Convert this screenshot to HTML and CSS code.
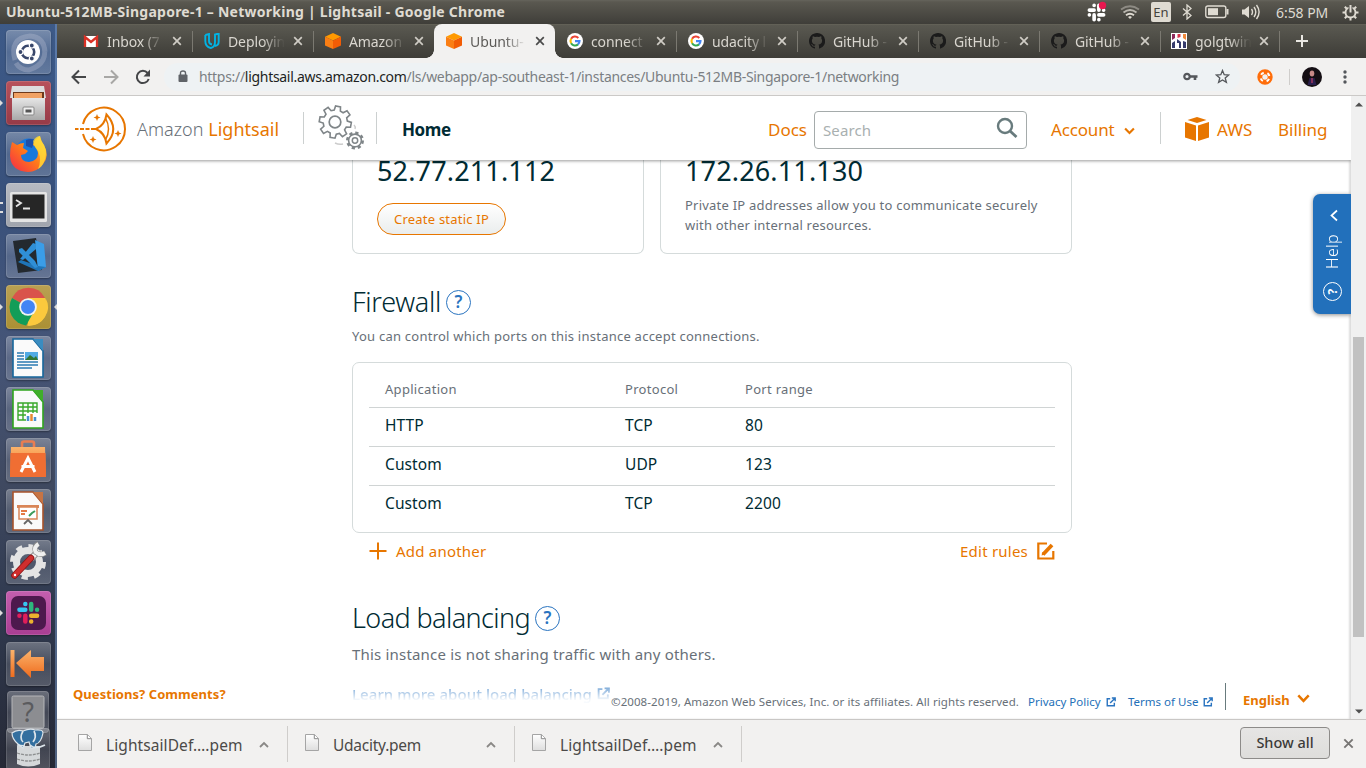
FILE: index.html
```html
<!DOCTYPE html>
<html lang="en">
<head>
<meta charset="utf-8">
<title>Ubuntu-512MB-Singapore-1 – Networking | Lightsail</title>
<link rel="stylesheet" href="styles.css">
</head>
<body>
<svg class="defs" width="0" height="0">
  <defs>
    <linearGradient id="gOrange" x1="0" y1="0" x2="0" y2="1"><stop offset="0" stop-color="#fbb36b"/><stop offset="1" stop-color="#ee6a1c"/></linearGradient>
    <linearGradient id="gFox" x1="0" y1="1" x2="1" y2="0"><stop offset="0" stop-color="#f5264a"/><stop offset=".5" stop-color="#ff7a1a"/><stop offset="1" stop-color="#ffe23c"/></linearGradient>
    <linearGradient id="gGrey" x1="0" y1="0" x2="0" y2="1"><stop offset="0" stop-color="#e6e6e6"/><stop offset="1" stop-color="#a8a8a8"/></linearGradient>
    <linearGradient id="gPage" x1="0" y1="0" x2="0" y2="1"><stop offset="0" stop-color="#fff"/><stop offset="1" stop-color="#dedede"/></linearGradient>
    <symbol id="cube" viewBox="0 0 16 16"><path fill="#ff9900" d="M8 0l8 3.8-8 3.6L0 3.8z"/><path fill="#fa7e14" d="M0 3.8l8 3.6V16l-8-3.4z"/><path fill="#f25c05" d="M16 3.8L8 7.4V16l8-3.4z"/></symbol>
    <symbol id="google" viewBox="0 0 16 16"><circle cx="8" cy="8" r="8" fill="#fff"/><g fill="none" stroke-width="2.1"><path stroke="#ea4335" d="M4.1 5.8A4.5 4.5 0 0 1 11.3 5"/><path stroke="#fbbc05" d="M4.1 10.2a4.5 4.5 0 0 1 0-4.4"/><path stroke="#34a853" d="M11 11.4a4.5 4.5 0 0 1-6.9-1.2"/><path stroke="#4285f4" d="M8 8.1h4.5A4.5 4.5 0 0 1 11 11.4"/></g></symbol>
    <symbol id="github" viewBox="0 0 16 16"><path fill="#1b1b1b" d="M8 0C3.6 0 0 3.6 0 8c0 3.5 2.3 6.500 5.500 7.600.4.1.5-.2.5-.4v-1.500c-2.200.5-2.700-.9-2.700-.9-.4-.9-.9-1.200-.9-1.200-.7-.5.1-.5.1-.5.8.1 1.200.8 1.200.8.7 1.200 1.900.9 2.300.7.1-.5.3-.9.5-1.100-1.800-.2-3.600-.9-3.600-4 0-.9.3-1.600.8-2.100-.1-.2-.4-1 .1-2.100 0 0 .7-.2 2.200.8a7.600 7.600 0 0 1 4 0c1.500-1 2.200-.8 2.200-.8.4 1.100.2 1.900.1 2.100.5.6.8 1.300.8 2.100 0 3.100-1.900 3.800-3.700 4 .3.300.6.8.6 1.500v2.200c0 .2.100.5.600.4A8 8 0 0 0 8 0z"/></symbol>
    <symbol id="x" viewBox="0 0 10 10"><path d="M1.200 1.200l7.600 7.600M8.800 1.200L1.200 8.800" fill="none" stroke="currentColor" stroke-width="1.700"/></symbol>
    <symbol id="ext" viewBox="0 0 12 12"><path d="M5 2H1.500v8.500H10V7M7 1.200h4v4M10.800 1.400L5 7.200" fill="none" stroke="currentColor" stroke-width="1.700"/></symbol>
    <symbol id="file" viewBox="0 0 14 17"><path d="M.5.5h9l4 4v12H.5z" fill="url(#gPage)" stroke="#a5a5a5"/><path d="M9.300.7v4h4" fill="#fff" stroke="#888"/></symbol>
    <symbol id="slack" viewBox="0 0 24 24"><g stroke-width="4.600" stroke-linecap="round" fill="none"><path stroke="var(--a,#36c5f0)" d="M3 9h6M9 3h.01"/><path stroke="var(--b,#2eb67d)" d="M15 3v6M21 9h.01"/><path stroke="var(--c,#ecb22e)" d="M15 15h6M15 21h.01"/><path stroke="var(--d,#e01e5a)" d="M9 15v6M3 15h.01"/></g></symbol>
    <symbol id="up" viewBox="0 0 10 7"><path d="M1 6l4-4 4 4" fill="none" stroke="#8a8886" stroke-width="1.800"/></symbol>
    <symbol id="down" viewBox="0 0 12 8"><path d="M1.200 1.200L6 6.200l4.800-5" fill="none" stroke="currentColor" stroke-width="2.300"/></symbol>
  </defs>
</svg>
<div class="desktop">
  <header class="panel">
    <div class="panel-title">Ubuntu-512MB-Singapore-1 – Networking | Lightsail - Google Chrome</div>
    <div class="tray">
      <svg class="t-slack" width="22" height="22" viewBox="0 0 22 22"><use href="#slack" x="1" y="2" width="19" height="19"/><circle cx="16.500" cy="4.500" r="3.700" fill="#e8174f"/></svg>
      <svg class="t-wifi" width="20" height="14" viewBox="0 0 20 14" fill="none" stroke-width="1.900"><path stroke="#8d8a83" d="M1 4.500Q10-2 19 4.500"/><path stroke="#b9b6ae" d="M3.500 7.500q6.500-5 13 0"/><path stroke="#dfdbd2" d="M6 10.300q4-3 8 0"/><path d="M8 12l2-1 2 1-2 2z" fill="#dfdbd2"/></svg>
      <span class="t-lang">En</span>
      <svg class="t-bt" width="10" height="16" viewBox="0 0 10 16"><path d="M1 4.500l8 7L5 15V1l4 3.500-8 7" fill="none" stroke="#dfdbd2" stroke-width="1.300"/></svg>
      <svg class="t-bat" width="24" height="14" viewBox="0 0 24 14"><rect x=".8" y="1" width="20" height="11.500" rx="2" fill="none" stroke="#dfdbd2" stroke-width="1.400"/><rect x="3" y="3.200" width="10" height="7" fill="#dfdbd2"/><path d="M22.500 4v5.500" stroke="#dfdbd2" stroke-width="2"/></svg>
      <svg class="t-vol" width="20" height="16" viewBox="0 0 20 16"><path d="M1 5.500h2.500L8 2v12l-4.500-3.500H1z" fill="#dfdbd2"/><path d="M10.500 5q2 3 0 6M13 3q3.600 5 0 10M15.500 1q5.200 7 0 14" fill="none" stroke="#dfdbd2" stroke-width="1.400"/></svg>
      <span class="t-clock">6:58 PM</span>
      <svg class="t-gear" width="17" height="17" viewBox="0 0 17 17"><circle cx="8.500" cy="8.500" r="5" fill="none" stroke="#dfdbd2" stroke-width="1.900"/><g stroke="#dfdbd2" stroke-width="2"><path d="M.5 8.500h3M13.500 8.500h3M8.500 13.500v3M2.800 2.800l2 2M14.200 2.800l-2 2M2.800 14.200l2-2M14.200 14.200l-2-2"/></g><path d="M8.500 2v6" stroke="#4f4d47" stroke-width="4"/><path d="M8.500 1v7.500" stroke="#dfdbd2" stroke-width="2"/></svg>
    </div>
  </header>
  <div class="below">
    <nav class="launcher">
      <div class="tile"><svg width="45" height="44" viewBox="0 0 45 44"><path d="M9 30Q3 8 24 6q14 1 15 16M37 13q7 20-14 27-9 0-13-7" fill="none" stroke="#b9c1d4" stroke-width="5" opacity=".35"/><circle cx="22" cy="22" r="12" fill="#fff"/><circle cx="22" cy="22" r="6.200" fill="none" stroke="#38476b" stroke-width="2.600"/><g fill="#38476b" stroke="#fff" stroke-width="1.200"><circle cx="14.500" cy="22" r="2.500"/><circle cx="25.800" cy="15.500" r="2.500"/><circle cx="25.800" cy="28.500" r="2.500"/></g></svg></div>
      <div class="tile red run"><svg width="45" height="44" viewBox="0 0 45 44"><path d="M6 5h32l2 12H4z" fill="#ddd"/><path d="M7 11h31v8H7z" fill="#6e3a1c"/><path d="M8 12h28v8H8z" fill="#f1a264"/><path d="M6 17h33v22H6z" fill="url(#gGrey)"/><rect x="17" y="26" width="11" height="8" rx="1" fill="#eee" stroke="#888"/><path d="M19.500 28.500h6v3h-6z" fill="#555"/></svg></div>
      <div class="tile"><svg width="45" height="44" viewBox="0 0 45 44"><circle cx="23" cy="20" r="13.500" fill="#1678dc"/><path d="M20 8q5-2 9 0l-3 8-6-2z" fill="#1d4fa8"/><path d="M6 10l5 3q3-2 7-2l-1 5 5 3-3 3-4 1q0 7 8 7 9-1 9-9-1-6-5-8 1-6 7-9 1 5 4 9 6 11-1 19-6 8-15 8Q5 39 4 24q0-8 2-14z" fill="url(#gFox)"/><path d="M27 9q3-5 7-5 0 4 4 9 4 8 0 17-2 5-6 7 4-9 0-18-4-4-5-10z" fill="#ffdf3a" opacity=".75"/></svg></div>
      <div class="tile pale run twin"><svg width="45" height="44" viewBox="0 0 45 44"><rect x="4" y="9" width="37" height="30" rx="1.500" fill="#e4e4e4"/><rect x="6.500" y="11.500" width="32" height="24" fill="#262626"/><path d="M10 17l5 3-5 3.500M17 25.500h7" fill="none" stroke="#e4e4e4" stroke-width="1.800"/></svg></div>
      <div class="tile"><svg width="45" height="44" viewBox="0 0 45 44"><path d="M7 7l23-3 6 32-24 3z" fill="#23292f"/><path d="M29 6l9 4 2 23-8 4z" fill="#3a9de8"/><path d="M32 37l8-4-8-1-17-6-3 2z" fill="#1f75b8"/><path d="M13 15l3-1 13 13 3 6-3 1-16-16zM27 9l3 1v5L17 26l-3-1z" fill="#2f8fd6"/></svg></div>
      <div class="tile gold run focus"><svg width="45" height="44" viewBox="0 0 45 44"><path d="M22 22L6 13a18.500 18.500 0 0 1 33 0z" fill="#d9534b"/><path d="M22 22H39.500V13A18.500 18.500 0 0 1 22 40.500z" fill="#fbc93d"/><path d="M22 22L6 13a18.500 18.500 0 0 0 14 27.500l8-14z" fill="#129d58"/><path d="M22 13h17a18.500 18.500 0 0 1-18 27.500l8-14z" fill="#fbc93d"/><circle cx="22" cy="22" r="8.800" fill="#f0f3ef"/><circle cx="22" cy="22" r="7" fill="#4285f4"/></svg></div>
      <div class="tile"><svg width="45" height="44" viewBox="0 0 45 44"><path d="M7 3h20l10 12v26H7z" fill="#fafafa" stroke="#16669c" stroke-width="1.600"/><path d="M27 3h10v12z" fill="#3a8cc0"/><rect x="19" y="16" width="13" height="8" fill="#52abe4"/><path d="M19 24l5-5 4 3 2-2 2 4z" fill="#373"/><path d="M11 17h7M11 20h7M11 23h7M11 26h21M11 29h21M11 32h15" stroke="#2b7bb2" stroke-width="1.600"/></svg></div>
      <div class="tile"><svg width="45" height="44" viewBox="0 0 45 44"><path d="M7 3h20l10 12v26H7z" fill="#fafafa" stroke="#2fa51d" stroke-width="1.600"/><path d="M27 3h10v12z" fill="#3fae2a"/><path d="M12 16h19v17H12zM12 20h19M12 24h19M12 28h19M17 16v17M22 16v17M27 16v17" fill="none" stroke="#3aa82b" stroke-width="1.400"/><path d="M20 26h13v8H20z" fill="#fff"/><path d="M22 34v-5" stroke="#4a90cf" stroke-width="2.500"/><path d="M25.500 34v-7" stroke="#e88933" stroke-width="2.500"/><path d="M29 34v-4" stroke="#4a90cf" stroke-width="2.500"/></svg></div>
      <div class="tile"><svg width="45" height="44" viewBox="0 0 45 44"><path d="M16 12V5.500q0-2 2-2h8q2 0 2 2V12" fill="none" stroke="#e87d52" stroke-width="2.600"/><path d="M5 9h34l1 30H4z" fill="url(#gOrange)"/><path d="M4.500 15h35l.5 24H4z" fill="#f06e33"/><path d="M15 34l7-14 7 14M15.500 28.500h13" fill="none" stroke="#fff" stroke-width="3"/></svg></div>
      <div class="tile"><svg width="45" height="44" viewBox="0 0 45 44"><path d="M7 3h20l10 12v26H7z" fill="#fafafa" stroke="#a8532b" stroke-width="1.600"/><path d="M27 3h10v12z" fill="#c77444"/><path d="M11 16h22v3H11z" fill="#d98557"/><rect x="13" y="18" width="18" height="12" fill="#fff" stroke="#d98557" stroke-width="1.500"/><path d="M15 22h6M15 25h4" stroke="#e37b45" stroke-width="2"/><path d="M23 27l3-3 3-2" fill="none" stroke="#3c9b5a" stroke-width="2"/><path d="M18 35l4-4 4 4" fill="none" stroke="#666" stroke-width="1.800"/></svg></div>
      <div class="tile"><svg width="45" height="44" viewBox="0 0 45 44"><circle cx="22" cy="22" r="11.500" fill="none" stroke="#e4e4e4" stroke-width="7"/><circle cx="22" cy="22" r="16" fill="none" stroke="#e4e4e4" stroke-width="4" stroke-dasharray="6.280 6.280"/><path d="M25 19l8-9" stroke="#8a8a8a" stroke-width="6.500"/><path d="M25 19l8-9" stroke="#efefef" stroke-width="4.800"/><path d="M32.500 3.500q-5 3-3 8.500 4.500 4 10 1" fill="none" stroke="#8a8a8a" stroke-width="5.200"/><path d="M32.500 4q-5 3-3 8 4.500 4 9.500 1" fill="none" stroke="#efefef" stroke-width="3.800"/><path d="M8.500 35.500L25 18" stroke="#8e1416" stroke-width="6.500" stroke-linecap="round"/><path d="M8.500 35.500L25 18" stroke="#d02e2e" stroke-width="4.800" stroke-linecap="round"/><circle cx="9" cy="35" r="1.200" fill="#fff"/></svg></div>
      <div class="tile pink run"><svg width="45" height="44" viewBox="0 0 45 44"><rect x="5" y="5" width="35" height="34" rx="7" fill="#4d194d"/><use href="#slack" x="10.500" y="10" width="23.500" height="23.500"/></svg></div>
      <div class="tile"><svg width="45" height="44" viewBox="0 0 45 44"><path d="M4.500 8h4v27h-4zM10 21L25 8v7h13v14H25v7z" fill="url(#gOrange)"/></svg></div>
      <div class="tile help-tile"><svg width="42" height="42" viewBox="0 0 42 42"><rect x="5" y="5" width="32" height="32" rx="1.500" fill="#8c8d91" stroke="#b5b6b9"/></svg><span>?</span></div>
      <div class="tile pg-tile"><svg width="44" height="42" viewBox="0 0 44 42"><path d="M11 18h23v18q-12 5-23 0z" fill="#d5d8da"/><path d="M11 25q12 4 23 0M11 31q12 4 23 0" fill="none" stroke="#8d8f90" stroke-width="1.300" stroke-dasharray="3 1"/><path d="M6 5q5-4 11-2 7-3 12-1 8-1 8 3-2 10-7 11l-1 4h-4l-2-6-4 1-2 5-5-4Q6 11 6 5z" fill="#336f9f" stroke="#dce4ea" stroke-width="1.200"/><path d="M17 3q-4 7 0 11M28 3q3 6-1 11M24 17q5 5 15 0M11 17l8 1" fill="none" stroke="#dce4ea" stroke-width="1.700"/></svg></div>
    </nav>
    <main class="chrome">
      <div class="tabs">
        <div class="tab"><svg width="16" height="16" viewBox="0 0 16 16"><path fill="#fff" d="M1 3h14v11H1z"/><path d="M2 14V4l6 5 6-5v10" fill="none" stroke="#d93025" stroke-width="2.300"/></svg><span class="tt">Inbox (7</span><svg class="tx"><use href="#x"/></svg></div>
        <div class="tab"><svg width="16" height="16" viewBox="0 0 16 16"><path d="M1.300 2v6q0 6 5.500 7Q11 14 11 9V1.500l3.700-1v8q0 4-3.700 4.500M1.300 2L5 1v7q0 3 3 3.500" fill="none" stroke="#02b3e4" stroke-width="1.900"/></svg><span class="tt">Deployin</span><svg class="tx"><use href="#x"/></svg></div>
        <div class="tab nosep"><svg width="16" height="16"><use href="#cube"/></svg><span class="tt">Amazon</span><svg class="tx"><use href="#x"/></svg></div>
        <div class="tab active"><svg width="16" height="16"><use href="#cube"/></svg><span class="tt">Ubuntu-</span><svg class="tx"><use href="#x"/></svg></div>
        <div class="tab"><svg width="16" height="16"><use href="#google"/></svg><span class="tt">connect</span><svg class="tx"><use href="#x"/></svg></div>
        <div class="tab"><svg width="16" height="16"><use href="#google"/></svg><span class="tt">udacity l</span><svg class="tx"><use href="#x"/></svg></div>
        <div class="tab"><svg width="16" height="16"><use href="#github"/></svg><span class="tt">GitHub -</span><svg class="tx"><use href="#x"/></svg></div>
        <div class="tab"><svg width="16" height="16"><use href="#github"/></svg><span class="tt">GitHub -</span><svg class="tx"><use href="#x"/></svg></div>
        <div class="tab"><svg width="16" height="16"><use href="#github"/></svg><span class="tt">GitHub -</span><svg class="tx"><use href="#x"/></svg></div>
        <div class="tab last"><svg width="16" height="16" viewBox="0 0 16 16"><path fill="#fff" d="M0 0h16v16H0z"/><path fill="#8e2a5b" d="M1 1h3v4L1 7z"/><path fill="#d8344b" d="M6.500 1h3v3l-3 1z"/><path fill="#f08a3c" d="M12 1h3v6l-3-2z"/><path fill="#353b6b" d="M1 10l3-2v7H1zM6 6l4 3v6H8v-5H6zM12 8l3 1v6h-3z"/></svg><span class="tt">golgtwin</span><svg class="tx"><use href="#x"/></svg></div>
        <svg class="newtab" width="12" height="12" viewBox="0 0 12 12"><path d="M6 0v12M0 6h12" stroke="#e9e7e2" stroke-width="2"/></svg>
      </div>
      <div class="toolbar">
        <svg width="16" height="16" viewBox="0 0 16 16"><path d="M15 8H2M8 1.500L1.500 8 8 14.500" fill="none" stroke="#454648" stroke-width="2"/></svg>
        <svg class="fwd" width="16" height="16" viewBox="0 0 16 16"><path d="M1 8h13M8 1.500L14.500 8 8 14.500" fill="none" stroke="#a8a7a5" stroke-width="2"/></svg>
        <svg class="rel" width="16" height="16" viewBox="0 0 16 16"><path d="M13.700 10A6.100 6.100 0 1 1 12.600 4" fill="none" stroke="#454648" stroke-width="2"/><path d="M15 .5v7H8.500z" fill="#454648"/></svg>
        <div class="omnibox">
          <svg width="10" height="13" viewBox="0 0 10 13"><rect x=".5" y="4.500" width="9" height="7.500" rx="1" fill="#5f6368"/><path d="M2.500 5V3q0-2 2.500-2t2.500 2v2" fill="none" stroke="#5f6368" stroke-width="1.400"/></svg>
          <span class="url">https://<b>lightsail.aws.amazon.com</b>/ls/webapp/ap-southeast-1/instances/Ubuntu-512MB-Singapore-1/networking</span>
          <svg class="key" width="15" height="9" viewBox="0 0 15 9"><circle cx="4" cy="4.500" r="2.700" fill="none" stroke="#54575b" stroke-width="2.200"/><path d="M7 4.500h7.500M12 5v3" stroke="#54575b" stroke-width="2.600"/></svg>
          <svg class="star" width="15" height="15" viewBox="0 0 15 15"><path d="M7.500 1.500l1.700 4.200 4.500.3-3.500 2.900 1.200 4.500-3.900-2.500-3.900 2.500 1.200-4.500L1.300 6l4.500-.3z" fill="none" stroke="#54575b" stroke-width="1.300"/></svg>
        </div>
        <svg class="buoy" width="16" height="16" viewBox="0 0 16 16"><circle cx="8" cy="8" r="5.200" fill="none" stroke="#ff6d0a" stroke-width="5"/><circle cx="8" cy="8" r="4.500" fill="none" stroke="#fff" stroke-width="2" stroke-dasharray="3.200 3.870" stroke-dashoffset="-2"/></svg>
        <i class="tb-sep"></i>
        <svg class="avatar" width="20" height="20" viewBox="0 0 20 20"><circle cx="10" cy="10" r="10" fill="#150f14"/><ellipse cx="10" cy="6.500" rx="2.300" ry="3" fill="#c98a88"/><path d="M5.500 18l2-7h5l2 7z" fill="#2b1f4d"/><path d="M10 11v5" stroke="#c23f63" stroke-width="1.200"/></svg>
        <svg class="dots" width="4" height="14" viewBox="0 0 4 14" fill="#54575b"><circle cx="2" cy="2" r="1.700"/><circle cx="2" cy="7" r="1.700"/><circle cx="2" cy="12" r="1.700"/></svg>
      </div>
      <div class="viewport">
        <div class="page">
          <header class="site-head">
            <svg class="logo" width="54" height="48" viewBox="0 0 54 48" fill="none" stroke="#e77600" stroke-width="2"><path d="M9 19A21.300 21.300 0 1 1 9 29"/><path d="M1 24h3.500M6 24h4M11.500 24h4M17 24h6"/><path d="M32.500 9.500Q31 20 22 24q9 4 10.500 14.500Q46 24 32.500 9.500z"/><path d="M31.500 13q6 11 0 22" stroke-width="1.500"/><g fill="#e77600" stroke="none"><path d="M23 9l1 2.500 2.500 1-2.500 1-1 2.500-1-2.500-2.500-1 2.500-1zM19 31l1 2.500 2.500 1-2.500 1-1 2.500-1-2.500-2.500-1 2.500-1zM44 25l1 2.500 2.500 1-2.500 1-1 2.500-1-2.500-2.500-1 2.500-1z"/></g></svg>
            <div class="brand"><span>Amazon</span> Lightsail</div>
            <i class="vsep s1"></i>
            <svg class="gears" width="48" height="48" viewBox="0 0 48 48" fill="none" stroke="#7f8588"><path d="M16.200 6.500l.6-4.200h5l.6 4.200 3 1.200 3.500-2.700 3.600 3.600-2.700 3.500 1.200 3 4.200.6v5l-4.200.6-1.200 3 2.700 3.500-3.600 3.600-3.500-2.700-3 1.200-.6 4.200h-5l-.6-4.200-3-1.200-3.500 2.700-3.600-3.600 2.700-3.500-1.200-3-4.200-.6v-5l4.200-.6 1.200-3-2.700-3.500L9.700 5l3.500 2.700z" stroke-width="1.600" transform="rotate(10 19 18) translate(-1 0)"/><circle cx="18" cy="18" r="5.800" stroke-width="1.700"/><circle cx="38" cy="36.500" r="7.700" stroke-width="2.600" stroke-dasharray="3.200 2.850"/><circle cx="38" cy="36.500" r="6.400" stroke-width="1.600"/><circle cx="38" cy="36.500" r="2.700" stroke-width="1.500"/><path d="M37 21q2 2 1 4M18 39q4 2 8 1" stroke="#ccc" stroke-width="1.500"/></svg>
            <i class="vsep s2"></i>
            <a class="home">Home</a>
            <a class="docs">Docs</a>
            <div class="search"><span>Search</span><svg width="22" height="22" viewBox="0 0 22 22"><circle cx="9" cy="9" r="7" fill="none" stroke="#687b7d" stroke-width="2.400"/><path d="M14 14l6.500 6" stroke="#687b7d" stroke-width="2.800"/></svg></div>
            <a class="account">Account</a><svg class="caret" width="11" height="8"><use href="#down"/></svg>
            <i class="vsep s3"></i>
            <svg class="awsbox" width="24" height="24" viewBox="0 0 24 24" fill="#e77600"><path d="M12 0l9.500 3L12 6 2.500 3zM0 5l11 3.500V24L0 20.500zM24 5L13 8.500V24l11-3.500z"/></svg>
            <a class="aws">AWS</a>
            <a class="billing">Billing</a>
          </header>
          <section class="content">
            <div class="ips">
              <div class="card c1"><div class="ip">52.77.211.112</div><button class="pill">Create static IP</button></div>
              <div class="card c2"><div class="ip">172.26.11.130</div><p>Private IP addresses allow you to communicate securely<br>with other internal resources.</p></div>
            </div>
            <h2 class="h-fw"><span>Firewall</span><b>?</b></h2>
            <p class="sub"><span>You can control which ports on this instance accept connections.</span></p>
            <div class="rules">
              <div class="row head"><span>Application</span><span>Protocol</span><span>Port range</span></div>
              <div class="row"><span>HTTP</span><span>TCP</span><span>80</span></div>
              <div class="row"><span>Custom</span><span>UDP</span><span>123</span></div>
              <div class="row"><span>Custom</span><span>TCP</span><span>2200</span></div>
            </div>
            <div class="actions">
              <a><svg width="18" height="18" viewBox="0 0 18 18"><path d="M9 .5v17M.5 9h17" stroke="#e77600" stroke-width="2"/></svg>Add another</a>
              <a class="edit">Edit rules<svg width="18" height="18" viewBox="0 0 18 18" fill="none" stroke="#e77600" stroke-width="2.200"><path d="M10 1.500H1.300v15h15V9"/><path d="M6 12.500L15 3" stroke-width="3.800"/><path d="M4.500 13.500l1-3.500 2.500 2.500z" fill="#e77600" stroke="none"/></svg></a>
            </div>
            <h2 class="h-lb"><span>Load balancing</span><b>?</b></h2>
            <p class="share"><span>This instance is not sharing traffic with any others.</span></p>
            <div class="learn"><span>Learn more about load balancing</span><svg width="13" height="13"><use href="#ext"/></svg></div>
          </section>
          <footer class="foot">
            <a class="qc">Questions? Comments?</a>
            <span class="copy">©2008-2019, Amazon Web Services, Inc. or its affiliates. All rights reserved.</span>
            <a class="pp">Privacy Policy</a><svg width="10" height="10"><use href="#ext"/></svg>
            <a class="tou">Terms of Use</a><svg width="10" height="10"><use href="#ext"/></svg>
            <i></i>
            <a class="lang">English</a><svg class="lc" width="13" height="9"><use href="#down"/></svg>
          </footer>
          <aside class="help"><svg width="8" height="13" viewBox="0 0 8 13"><path d="M7 1.500L1.500 6.500 7 11.500" fill="none" stroke="#fff" stroke-width="1.700"/></svg><span class="hl">Help</span><span class="hq">?</span></aside>
        </div>
        <div class="scroll"><svg width="8" height="5"><path d="M0 4.500h8L4 .5z" fill="#505050"/></svg><i></i><svg width="8" height="5"><path d="M0 .5h8L4 4.500z" fill="#505050"/></svg></div>
      </div>
      <div class="shelf">
        <div class="dl"><svg class="fi" width="14" height="17"><use href="#file"/></svg><span>LightsailDef….pem</span><svg class="fu" width="10" height="7"><use href="#up"/></svg></div>
        <div class="dl"><svg class="fi" width="14" height="17"><use href="#file"/></svg><span class="short">Udacity.pem</span><svg class="fu" width="10" height="7"><use href="#up"/></svg></div>
        <div class="dl"><svg class="fi" width="14" height="17"><use href="#file"/></svg><span>LightsailDef….pem</span><svg class="fu" width="10" height="7"><use href="#up"/></svg></div>
        <button>Show all</button>
        <svg class="sx" width="11" height="11"><use href="#x" width="11" height="11"/></svg>
      </div>
    </main>
  </div>
</div>
</body>
</html>
```
FILE: styles.css
```css
* { box-sizing: border-box; }
body { margin: 0; font-family: "Noto Sans", "Open Sans", sans-serif; overflow: hidden; }
svg { display: block; flex: none; }
.defs { position: absolute; }
p, h2 { margin: 0; }
i { display: block; flex: none; }
.desktop { width: 1366px; height: 768px; display: flex; flex-direction: column; overflow: hidden; white-space: nowrap; }

/* Top panel */
.panel { height: 24px; flex: none; display: flex; justify-content: space-between; background: linear-gradient(#65645c 0, #5a5850 2px, #3f3e39 100%); color: #dfdbd2; }
.panel-title { padding-left: 6px; font-size: 14px; font-weight: 700; line-height: 23px; letter-spacing: .25px; }
.tray { display: flex; align-items: center; padding-right: 7px; }
.t-slack { --a: #fff; --b: #fff; --c: #fff; --d: #fff; margin-right: 12px; }
.t-wifi { margin-right: 11px; }
.t-lang { width: 20px; height: 20px; border-radius: 2px; background: #dfdbd2; color: #45433d; font-size: 13px; line-height: 20px; text-align: center; margin-right: 11px; }
.t-bt { margin-right: 13px; }
.t-bat { margin-right: 12px; }
.t-vol { margin-right: 15px; }
.t-clock { font-size: 14px; width: 54px; letter-spacing: -.05px; margin-right: 12px; }

.below { flex: 1; display: flex; min-height: 0; }

/* Launcher */
.launcher { width: 57px; flex: none; display: flex; flex-direction: column; padding: 6px 0 0 6px; gap: 7px; background: linear-gradient(90deg, transparent 55px, #7899c9 56px, transparent 57px), linear-gradient(#3d5a88 0, #38517c 22%, #465577 45%, #3f4960 62%, #303a50 78%, #262936 100%); overflow: hidden; }
.tile { position: relative; width: 45px; height: 44px; flex: none; border-radius: 4px; background: linear-gradient(rgba(255,255,255,.3), rgba(255,255,255,.12) 50%, rgba(255,255,255,.2)); box-shadow: inset 0 0 0 1px rgba(255,255,255,.13), 0 1px 2px rgba(0,0,0,.35); }
.tile.red { background: linear-gradient(#b8525b, #963a47); }
.tile.pale { background: linear-gradient(#b6bac2, #a0a4ad); }
.tile.gold { background: linear-gradient(#b9a053, #ab9034); }
.tile.pink { background: linear-gradient(#c35fae, #a93e93); }
.run::before, .focus::after { content: ""; position: absolute; left: -6px; top: 19px; border: 3px solid transparent; border-left-color: #ddd; border-right: 0; }
.focus::after { left: auto; right: -6px; border: 3px solid transparent; border-right-color: #ddd; border-left: 0; }
.twin::before { top: 19px; width: 3px; height: 7px; border: 2px solid #ddd; border-width: 2px 0; }
.help-tile { width: 42px; height: 42px; margin: -2px 0 0 1px; }
.help-tile span { position: absolute; left: 0; top: 0; width: 42px; text-align: center; font-size: 27px; line-height: 42px; color: #5a5b5e; }
.pg-tile { width: 44px; height: 42px; margin-top: -12px; }

.chrome { flex: 1; min-width: 0; display: flex; flex-direction: column; }

/* Tab strip */
.tabs { height: 34px; flex: none; display: flex; padding-left: 14px; background: linear-gradient(#6a685c 0, #5a5951 1px, #3d3c37 100%); }
.tab { position: relative; width: 121px; flex: none; display: flex; align-items: center; padding: 0 10px 0 12px; color: #d9d6cf; }
.tab::after { content: ""; position: absolute; right: -1px; top: 7px; width: 1px; height: 21px; background: #7b7971; }
.tab.last { width: 120px; margin-left: -1px; }
.tab.nosep::after, .tab.active::after { display: none; }
.tt { width: 58px; margin: 0 -1px 0 8px; font-size: 14px; letter-spacing: -.1px; -webkit-mask-image: linear-gradient(90deg, #000 60%, rgba(0,0,0,.05) 95%); mask-image: linear-gradient(90deg, #000 60%, rgba(0,0,0,.05) 95%); }
.tx { width: 10px; height: 10px; margin-left: 8px; color: #cfccc5; }
.tab.active { background: #f2f1f0; border-radius: 8px 8px 0 0; color: #5c5a57; }
.tab.active .tx { color: #4a4a4a; }
.tab.active::before { content: ""; position: absolute; left: -8px; right: -8px; bottom: 0; height: 8px; background: radial-gradient(circle at 0 0, transparent 7.500px, #f2f1f0 8px) 0 0/8px 8px no-repeat, radial-gradient(circle at 100% 0, transparent 7.500px, #f2f1f0 8px) 100% 0/8px 8px no-repeat; }
.newtab { margin: 11px 0 0 17px; }

/* Toolbar */
.toolbar { height: 38px; flex: none; display: flex; align-items: center; padding-left: 14px; background: #f2f1f0; border-bottom: 1px solid #cbc9c7; }
.fwd { margin-left: 16px; }
.rel { margin-left: 16px; }
.omnibox { width: 1076px; height: 28px; flex: none; display: flex; align-items: center; margin-left: 13px; padding-left: 14px; border-radius: 14px; background: #eef2f4; }
.url { width: 984px; margin-left: 11px; font-size: 14px; color: #7b7f83; letter-spacing: -.3px; }
.url b { font-weight: 400; color: #1d1f22; }
.star { margin-left: 17px; }
.buoy { margin-left: 17px; }
.tb-sep { width: 1px; height: 16px; margin-left: 16px; background: #cfcdcb; }
.avatar { margin-left: 12px; }
.dots { margin-left: 21px; }

/* Page */
.viewport { height: 623px; flex: none; display: flex; }
.page { position: relative; width: 1294px; overflow: hidden; background: #fff; display: flex; flex-direction: column; box-shadow: inset -2px 0 2px #ddd; }
.site-head { position: relative; z-index: 2; height: 64px; flex: none; display: flex; align-items: center; padding-left: 17px; background: #fff; box-shadow: 0 1px 3px rgba(0,0,0,.4); font-size: 18px; color: #e77600; }
.logo { margin-top: 2px; }
.brand { width: 166px; margin-left: 9px; padding-top: 2px; font-size: 18px; letter-spacing: .02px; }
.brand span { font-weight: 300; color: #687078; }
.vsep { width: 1px; height: 32px; background: #ccd0d0; }
.gears { margin: 0 11px 0 13px; }
.home { width: 366px; margin-left: 25px; padding-top: 2px; color: #002b33; font-weight: 700; font-size: 17px; letter-spacing: -.4px; }
.docs { width: 46px; padding-top: 2px; font-size: 17px; }
.search { width: 213px; height: 38px; margin-top: 4px; border: 1px solid #a5abab; border-radius: 4px; padding: 0 8px; display: flex; justify-content: space-between; align-items: center; color: #a9b0b0; font-size: 15px; letter-spacing: .1px; }
.search svg { margin-top: -4px; }
.account { width: 73px; margin-left: 24px; padding-top: 2px; font-size: 17px; letter-spacing: -.15px; }
.caret { margin-top: 5px; }
.s3 { margin: 0 24px 0 25px; }
.awsbox { margin-top: 2px; }
.aws { width: 61px; margin-left: 8px; padding-top: 2px; font-size: 17px; }
.billing { padding-top: 2px; font-size: 17px; }

.content { margin-left: 295px; width: 720px; height: 560px; color: #002b33; flex: none; }
.ips { display: flex; gap: 16px; height: 94px; }
.card { border: 1px solid #d5dbdb; border-top: 0; border-radius: 0 0 7px 7px; padding: 0 24px; }
.c1 { width: 292px; }
.c2 { width: 412px; }
.ip { font-size: 27px; line-height: 32px; margin-top: -5px; letter-spacing: .15px; }
.pill { display: block; width: 129px; height: 32px; margin-top: 16px; padding: 0; border: 1px solid #e77600; border-radius: 16px; background: linear-gradient(#fff, #eaeded); color: #e77600; font: 400 13px "Noto Sans", sans-serif; letter-spacing: .22px; }
.card p { margin-top: 8px; font-size: 13px; line-height: 20px; color: #687078; letter-spacing: .22px; }
h2 { display: flex; align-items: center; font-weight: 300; font-size: 27px; line-height: 36px; letter-spacing: -.6px; }
h2 b { width: 25px; height: 25px; margin-left: 5px; border: 1.500px solid #2a74c0; border-radius: 50%; color: #2a74c0; font-size: 17px; font-weight: 600; line-height: 22px; text-align: center; letter-spacing: 0; }
.h-fw { margin-top: 30px; letter-spacing: -.3px; }
.sub { margin-top: 6px; font-size: 13px; line-height: 20px; color: #687078; letter-spacing: .24px; }
.rules { height: 171px; margin-top: 16px; padding: 7px 16px 0; border: 1px solid #d5dbdb; border-radius: 7px; }
.row { height: 39px; padding: 0 16px; display: grid; grid-template-columns: 240px 120px 1fr; align-items: center; font-size: 15.500px; letter-spacing: .1px; border-top: 1px solid #d0d4d4; padding-bottom: 4px; }
.row.head { height: 37px; border: 0; font-size: 13px; letter-spacing: .3px; color: #687078; padding-bottom: 0; }
.actions { display: flex; justify-content: space-between; padding: 8px 17px 0; height: 38px; font-size: 15px; letter-spacing: .22px; line-height: 18px; color: #e77600; }
.actions a { display: flex; gap: 9px; align-items: center; height: 20px; }
.h-lb { margin-top: 29px; }
.share { margin-top: 8px; font-size: 15px; letter-spacing: .19px; line-height: 21px; color: #687078; }
.learn { display: flex; gap: 5px; margin-top: 19px; font-size: 15px; font-weight: 500; letter-spacing: .06px; line-height: 20px; color: #2a74c0; height: 22px; -webkit-mask-image: linear-gradient(rgba(0,0,0,.75), rgba(0,0,0,.05) 72%, rgba(0,0,0,.02)); mask-image: linear-gradient(rgba(0,0,0,.75), rgba(0,0,0,.05) 72%, rgba(0,0,0,.02)); }
.learn svg { margin-top: 3px; }
.foot { position: absolute; left: 0; right: 0; bottom: 3px; height: 32px; display: flex; align-items: center; padding-left: 16px; font-size: 12px; color: #687078; }
.foot svg { color: #2a74c0; margin-left: 4px; margin-top: 3px; }
.foot a { padding-top: 3px; color: #2470b8; }
.foot .qc { width: 538px; margin-top: -15px; font-size: 13px; font-weight: 700; color: #e77600; letter-spacing: .05px; }
.copy { width: 417px; padding-top: 3px; font-size: 11.500px; letter-spacing: .08px; }
.pp { width: 74px; font-size: 11.500px; }
.tou { width: 71px; margin-left: 12px; font-size: 11.500px; }
.foot i { width: 1px; height: 27px; margin: -8px 17px 0 12px; background: #687b7d; }
.foot .lang { width: 49px; padding-top: 0; font-size: 13px; font-weight: 700; color: #e77600; }
.foot .lc { color: #e77600; margin: -3px 0 0 5px; }
.help { position: absolute; z-index: 3; right: 0; top: 98px; width: 38px; height: 120px; border-radius: 7px 0 0 7px; background: #2270bb; color: #fff; box-shadow: 0 1px 4px rgba(0,0,0,.45); display: flex; flex-direction: column; align-items: center; padding: 15px 0 0; }
.help svg { margin-left: 4px; }
.hl { writing-mode: vertical-rl; transform: rotate(180deg); font-size: 16px; font-weight: 300; line-height: 20px; height: 35px; margin-top: 12px; letter-spacing: .3px; }
.hq { transform: rotate(-90deg); width: 19px; height: 19px; border: 1px solid #fff; border-radius: 50%; font-size: 12px; line-height: 17px; text-align: center; font-weight: 700; margin-top: 13px; }
.scroll { width: 15px; background: #f0f0f0; display: flex; flex-direction: column; align-items: center; padding-top: 6px; }
.scroll i { width: 11px; height: 300px; margin: 230px 0 72px; background: #c1c1c1; }

/* Downloads shelf */
.shelf { flex: 1; display: flex; align-items: flex-start; background: #f2f1f0; border-top: 1px solid #c9c7c5; color: #4c4a48; }
.dl { width: 227px; height: 36px; margin-top: 6px; padding: 2px 0 0 17px; display: flex; align-items: center; border-right: 1px solid #cfcdcb; font-size: 15.500px; }
.dl:first-child { width: 231px; padding-left: 21px; }
.dl span { width: 144px; margin-left: 14px; letter-spacing: .08px; }
.dl .short { letter-spacing: -.25px; }
.fi { margin-top: -5px; }
.fu { margin: -2px 0 0 9px; }
.shelf button { width: 90px; height: 32px; margin: 7px 13px 0 auto; border: 1px solid #8d8b89; border-radius: 4px; background: linear-gradient(#e6e5e4, #dedddb); color: #3c3a38; font: 500 14.500px "Noto Sans", sans-serif; padding: 0 0 2px; }
.sx { color: #777573; margin: 18px 12px 0 0; }
```
